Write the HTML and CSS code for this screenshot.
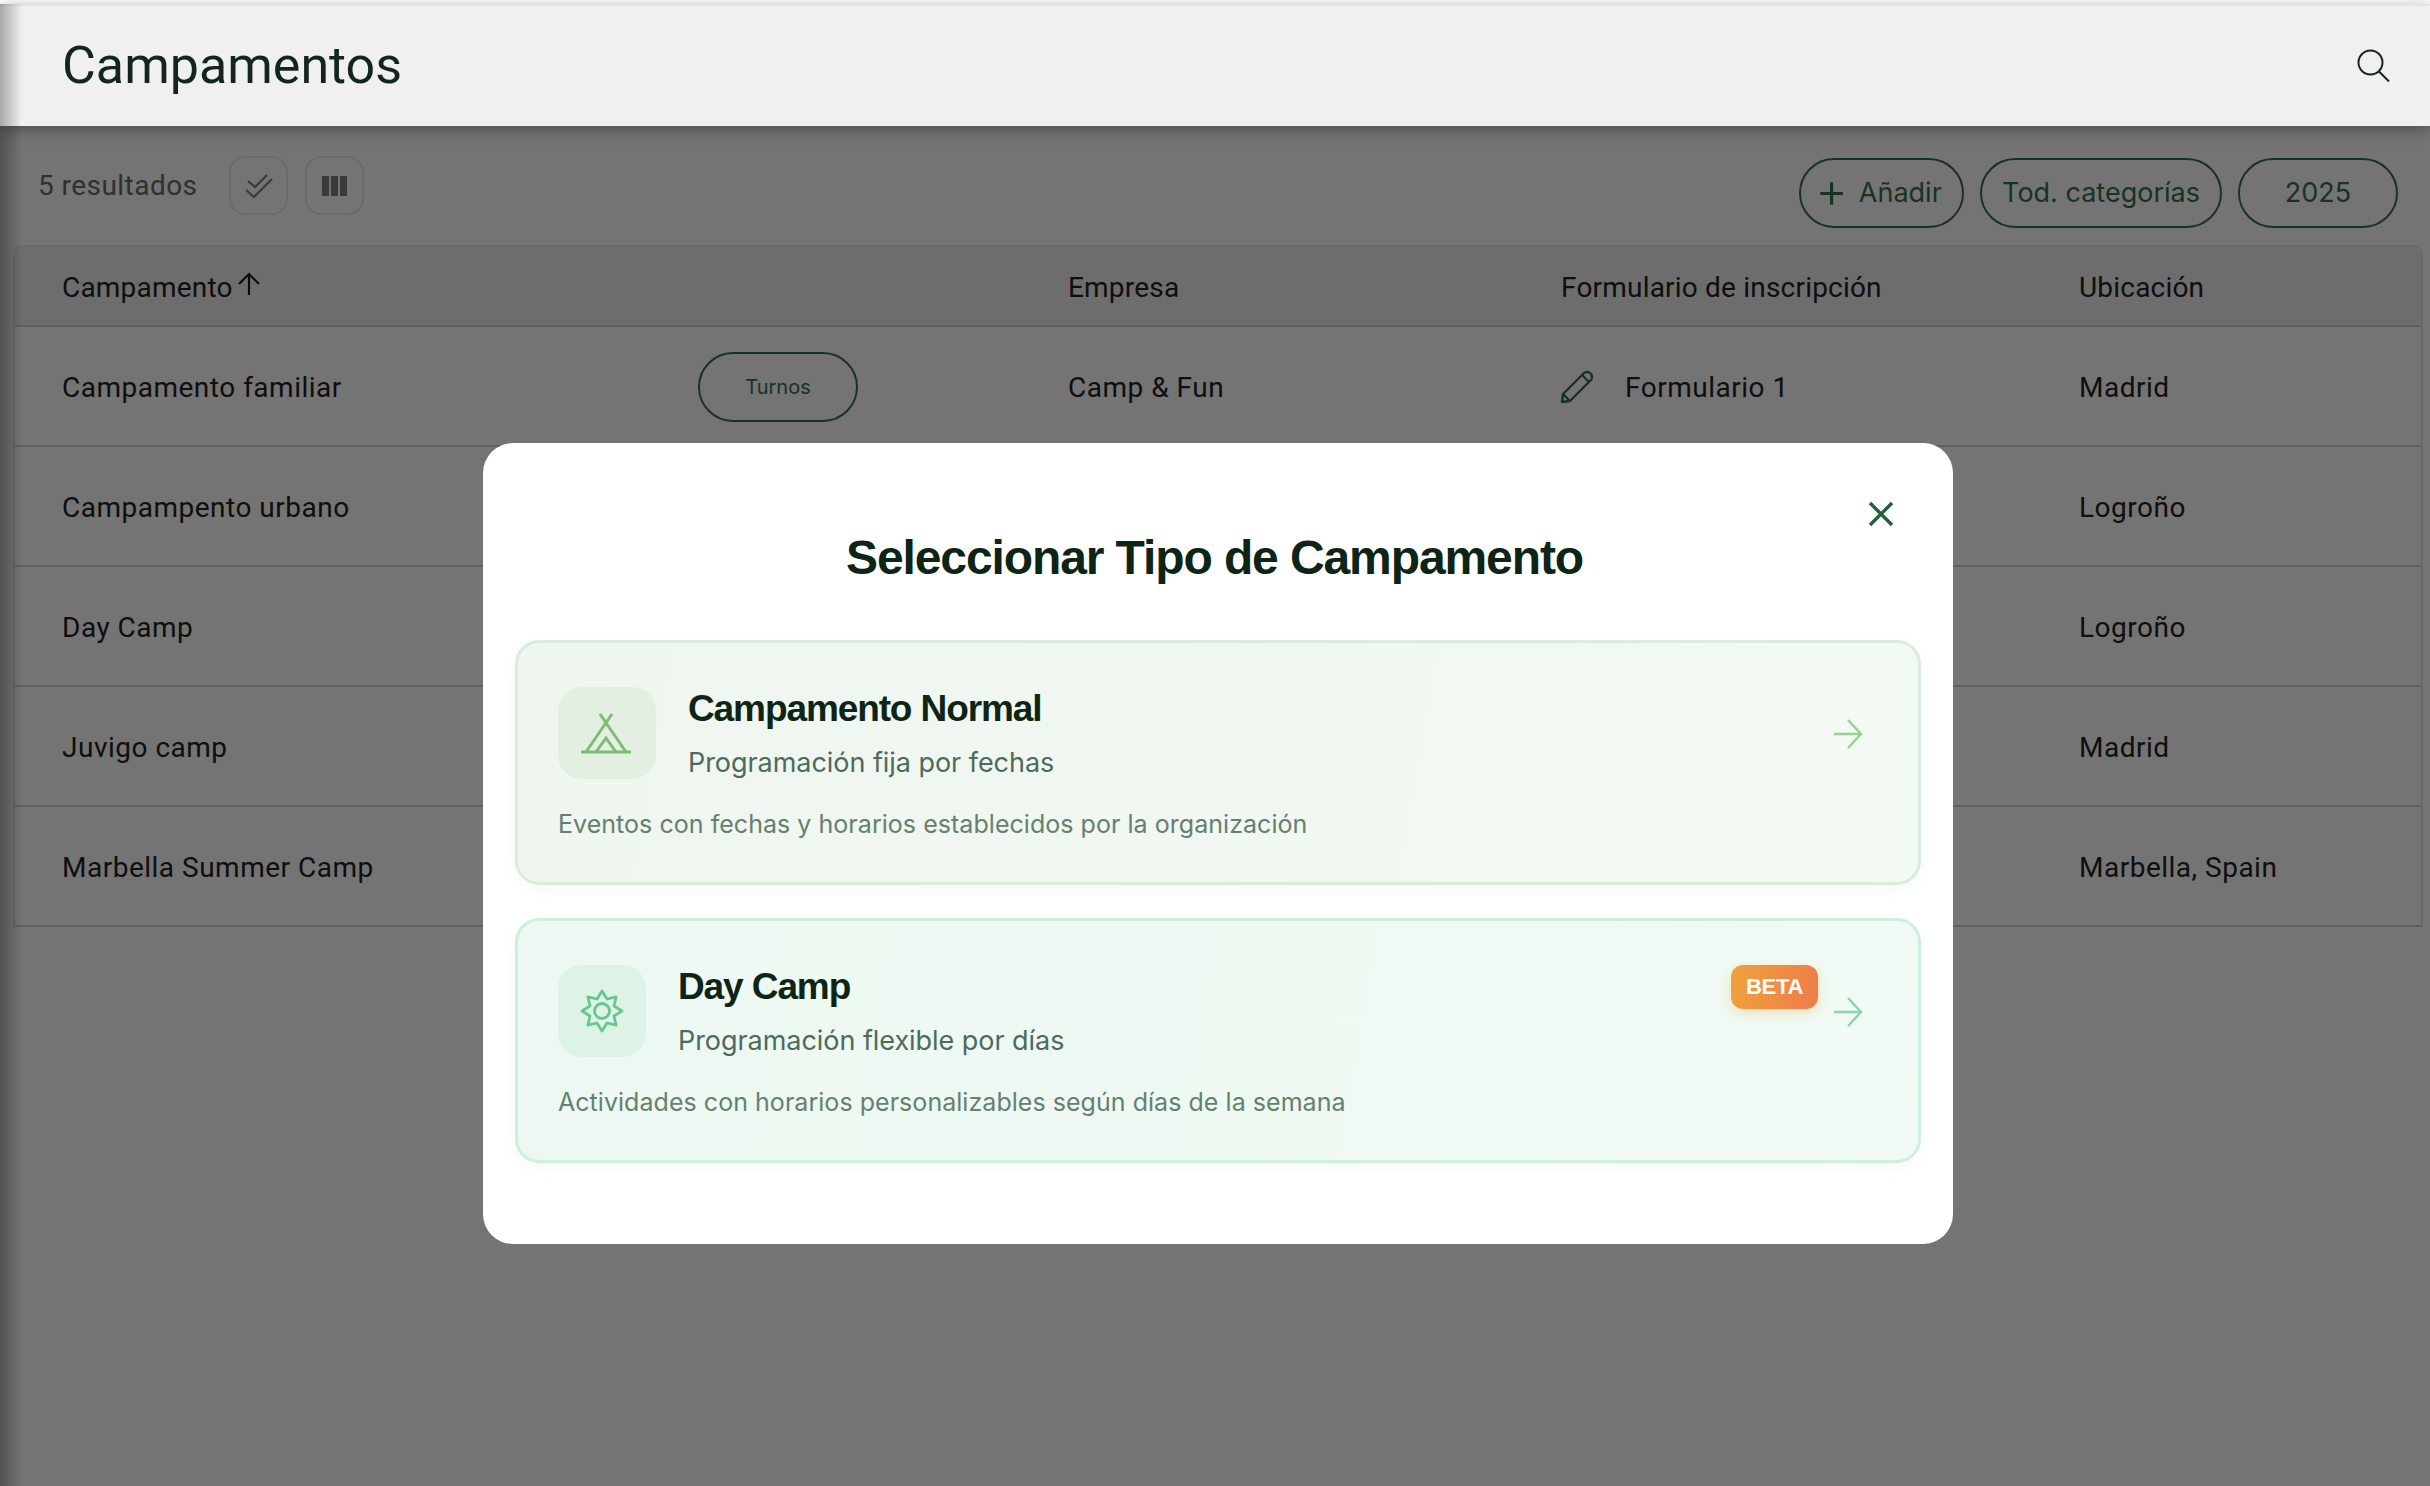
FILE: index.html

```html
<!DOCTYPE html>
<html lang="es">
<head>
  <meta charset="UTF-8" />
  <title>Campamentos</title>
  <link rel="stylesheet" href="styles.css">
</head>
<body>

<header class="topbar">
  <h1>Campamentos</h1>
  <svg class="search-icon" viewBox="0 0 34 34" fill="none" stroke="#12261b" stroke-width="2">
    <circle cx="13.5" cy="13.5" r="12" />
    <path d="M22 22.500 L32 32.500" />
  </svg>
</header>

<div class="toolbar">
  <div class="toolbar-left">
    <span class="count">5 resultados</span>
    <button class="icon-btn">
      <svg width="32" height="32" viewBox="0 0 32 32" fill="none" stroke="#808080" stroke-width="2.200">
        <path d="M5 11 L12 17 L24 5" />
        <path d="M3 20 L11 27 L29 9" />
      </svg>
    </button>
    <button class="icon-btn">
      <span class="cols"><i></i><i></i><i></i></span>
    </button>
  </div>
  <div class="toolbar-right">
    <button class="pill pill-add"><span class="plus">+</span>Añadir</button>
    <button class="pill pill-cat">Tod. categorías</button>
    <button class="pill pill-year">2025</button>
  </div>
</div>

<div class="table">
  <div class="row row-head">
    <div class="sort">Campamento
      <svg width="24" height="24" viewBox="0 0 24 24" fill="none" stroke="#1a1a1a" stroke-width="2.200">
        <path d="M12 23 V2 M2 12 L12 2 L22 12" />
      </svg>
    </div>
    <div></div>
    <div>Empresa</div>
    <div>Formulario de inscripción</div>
    <div>Ubicación</div>
  </div>
  <div class="row">
    <div>Campamento familiar</div>
    <div><button class="pill pill-small">Turnos</button></div>
    <div>Camp &amp; Fun</div>
    <div class="form-cell">
      <svg class="pencil" width="34" height="34" viewBox="0 0 34 34" fill="none" stroke="#35704f" stroke-width="2.400" stroke-linejoin="round">
        <path d="M2 32 L3 24 L24 3 Q27 1 30 3 L31 4 Q33 7 31 10 L10 31 Z" />
        <path d="M22 5 L29 12 M3 24 L10 31" />
      </svg>
      Formulario 1
    </div>
    <div>Madrid</div>
  </div>
  <div class="row"><div>Campampento urbano</div><div></div><div></div><div></div><div>Logroño</div></div>
  <div class="row"><div>Day Camp</div><div></div><div></div><div></div><div>Logroño</div></div>
  <div class="row"><div>Juvigo camp</div><div></div><div></div><div></div><div>Madrid</div></div>
  <div class="row"><div>Marbella Summer Camp</div><div></div><div></div><div></div><div>Marbella, Spain</div></div>
</div>

<div class="overlay">
  <div class="modal">
    <button class="close">
      <svg width="26" height="26" viewBox="0 0 26 26" fill="none" stroke="#22613c" stroke-width="3.400">
        <path d="M2 2 L24 24 M24 2 L2 24" />
      </svg>
    </button>
    <h2>Seleccionar Tipo de Campamento</h2>

    <div class="card card-normal">
      <div class="card-top">
        <div class="card-icon">
          <svg width="54" height="42" viewBox="0 0 54 42" fill="none" stroke="#7cbd73" stroke-width="3">
            <path d="M1 40 H51" />
            <path d="M20 2 L46 40 M32 2 L6 40" />
            <path d="M16 40 L26 26 L36 40" />
          </svg>
        </div>
        <div class="card-text">
          <h3>Campamento Normal</h3>
          <p>Programación fija por fechas</p>
        </div>
        <svg class="arrow" width="30" height="30" viewBox="0 0 30 30" fill="none" stroke="#98cf94" stroke-width="2.400">
          <path d="M1 15 H28 M15 1 L28 15 L15 29" />
        </svg>
      </div>
      <p class="card-desc">Eventos con fechas y horarios establecidos por la organización</p>
    </div>

    <div class="card card-day">
      <div class="card-top">
        <div class="card-icon card-icon-day">
          <svg width="44" height="44" viewBox="-22 -22 44 44" fill="none" stroke="#68c78c" stroke-width="2.800" stroke-linejoin="round">
            <path d="M20 0 L12 5 L14.100 14.100 L5 12 L0 20 L-5 12 L-14.100 14.100 L-12 5 L-20 0 L-12 -5 L-14.100 -14.100 L-5 -12 L0 -20 L5 -12 L14.100 -14.100 L12 -5 Z" />
            <circle r="7.500" />
          </svg>
        </div>
        <div class="card-text">
          <h3>Day Camp</h3>
          <p>Programación flexible por días</p>
        </div>
        <span class="beta">BETA</span>
        <svg class="arrow" width="30" height="30" viewBox="0 0 30 30" fill="none" stroke="#88d6a6" stroke-width="2.400">
          <path d="M1 15 H28 M15 1 L28 15 L15 29" />
        </svg>
      </div>
      <p class="card-desc">Actividades con horarios personalizables según días de la semana</p>
    </div>
  </div>
</div>

</body>
</html>
```

FILE: styles.css

```css
* { box-sizing: border-box; }
html, body { margin: 0; height: 100%; }
body {
  height: 1486px; overflow: hidden; background: #fff; padding-top: 4px;
  font-family: Roboto, sans-serif; color: #1a1a1a; position: relative;
}
/* shadow of the collapsed side menu */
body::before {
  content: ""; position: absolute; left: 0; top: 4px; bottom: 0; width: 22px; z-index: 30;
  background: linear-gradient(to right, rgba(0,0,0,.3), rgba(0,0,0,0));
}
button { font-family: inherit; background: none; cursor: pointer; }

.topbar {
  position: relative; z-index: 20; height: 122px; padding: 0 39px 2px 62px;
  display: flex; align-items: center; justify-content: space-between;
  background: #f0f0f0; border-top: 2px solid #e4e4e4;
  box-shadow: 0 3px 14px rgba(0,0,0,.35);
}
.topbar h1 { margin: 0; font-size: 52px; font-weight: 400; color: #12261b; }
.search-icon { width: 34px; height: 34px; margin-top: 2px; }

.toolbar {
  display: flex; justify-content: space-between; align-items: center;
  height: 119px; padding: 0 32px 0 38px;
}
.toolbar-left { display: flex; align-items: center; margin-top: 0; }
.toolbar-right { display: flex; gap: 16px; align-items: center; margin-top: 14px; }
.count { font-size: 28px; color: #6a6a6a; letter-spacing: .45px; margin-right: 32px; }
.icon-btn {
  width: 59px; height: 59px; border: 2px solid #eaeaea; border-radius: 16px; margin-right: 17px;
  display: flex; align-items: center; justify-content: center; padding: 0;
}
.cols { display: flex; gap: 2px; }
.cols i { width: 7px; height: 20px; background: #808080; }

.pill {
  height: 70px; padding: 0; border: 2px solid #35704f; border-radius: 35px;
  font-size: 27px; color: #35704f;
  display: flex; align-items: center; justify-content: center;
  font-family: Inter, sans-serif;
}
.plus { font-size: 50px; font-weight: 300; margin-right: 11px; line-height: 1; margin-top: -6px; }
.pill-add { width: 165px; padding-right: 6px; }
.pill-cat { width: 242px; }
.pill-year { width: 160px; }
.pill-small { width: 160px; font-size: 20px; }

.table {
  margin: 0 7px 0 13px; border: 2px solid #e6e6e6; border-bottom: 0; border-radius: 10px 10px 0 0;
}
.row {
  display: grid; grid-template-columns: 636px 370px 493px 518px 1fr;
  height: 120px; padding: 2px 0 0 47px; align-items: center;
  font-size: 28px; letter-spacing: .5px; color: #222;
  border-bottom: 2px solid #d0d0dc;
}
.row-head { height: 80px; background: #f0f0f0; border-radius: 10px 10px 0 0; letter-spacing: .2px; }
.sort { display: flex; align-items: center; gap: 4px; }
.sort svg { margin-top: -6px; }
.form-cell { display: flex; align-items: center; gap: 30px; }
.pencil { margin-left: -1px; margin-right: 1px; }

.overlay {
  position: absolute; left: 0; right: 0; top: 4px; bottom: 0; z-index: 10;
  background: rgba(0,0,0,.545); display: flex; justify-content: center; align-items: flex-start;
  padding: 439px 0 0 6px;
}
.modal {
  position: relative; width: 1470px; height: 801px; padding: 84px 32px 0;
  background: #fff; border-radius: 30px;
}
.modal h2 {
  margin: 0 0 51px; padding-right: 7px; text-align: center; font-family: "Liberation Sans", sans-serif;
  font-size: 48px; line-height: 62px; font-weight: 700; letter-spacing: -1.1px; color: #0d2417;
}
.close {
  position: absolute; right: 59px; top: 58px; border: 0; padding: 0; line-height: 0;
}

.card {
  height: 245px; margin-bottom: 33px; padding: 44px 55px 0 40px;
  border: 3px solid #dcecda; border-radius: 24px;
  background: linear-gradient(100deg, #eef6ef, #f3f9f3);
  box-shadow: 0 4px 16px rgba(120,190,130,.08);
}
.card-day {
  border-color: #cfefdc; background: linear-gradient(100deg, #ecf8f1, #f1faf4);
}
.card-top { display: flex; align-items: center; height: 92px; }
.card-icon {
  width: 98px; height: 92px; border-radius: 24px; background: #e3f0e1; margin-right: 32px;
  display: flex; align-items: center; justify-content: center; flex: none;
}
.card-icon-day { width: 88px; background: #dcf3e6; }
.card-text { flex: 1; margin-top: 2px; }
.card-text h3 {
  margin: 0 0 14px; font-family: "Liberation Sans", sans-serif; font-size: 37px; line-height: 44px;
  font-weight: 700; letter-spacing: -1.1px; color: #0d2417;
}
.card-text p {
  margin: 0; font-family: Inter, sans-serif; font-size: 27px; line-height: 36px; color: #4e6a5b;
  letter-spacing: -.05px;
}
.card-desc {
  margin: 28px 0 0; font-family: Inter, sans-serif; font-size: 25px; line-height: 34px; color: #66806f;
  letter-spacing: .04px;
}
.arrow { margin-top: 2px; }
.beta {
  align-self: flex-start; height: 44px; width: 87px; margin-right: 15px; border-radius: 12px;
  background: linear-gradient(100deg, #efa23c, #ee7c4b); color: #fff;
  font-family: "Liberation Sans", sans-serif; font-size: 22px; font-weight: 700; letter-spacing: -.3px;
  display: flex; align-items: center; justify-content: center;
  box-shadow: 0 4px 12px rgba(239,162,60,.3);
}
```
